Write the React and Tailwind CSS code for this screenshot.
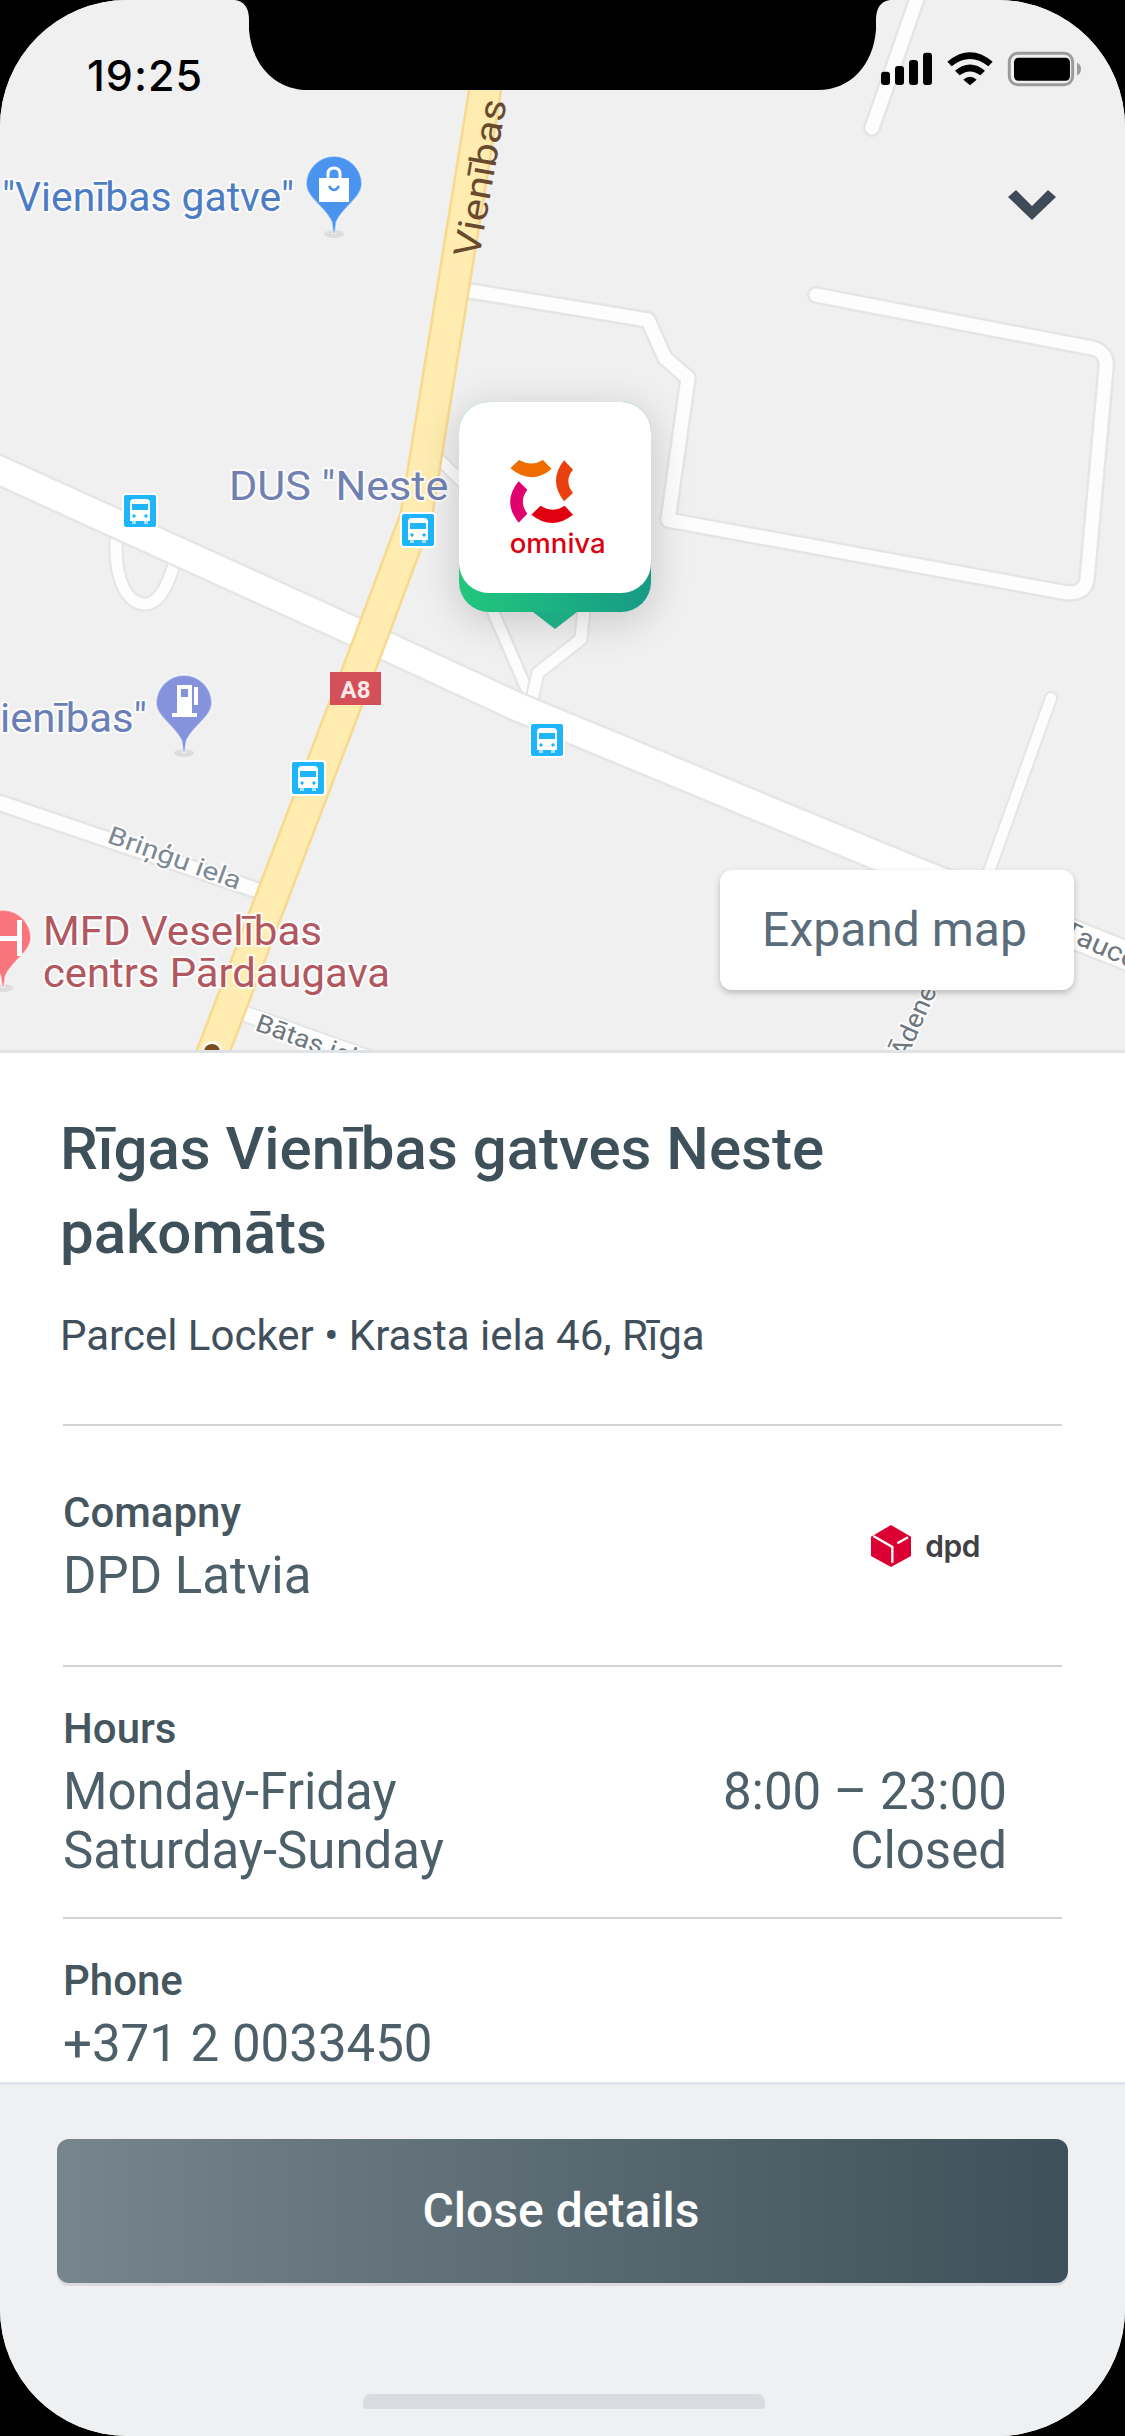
import React from "react";

function Bus({ x, y }) {
  return (
    <g transform={`translate(${x} ${y})`}>
      <rect x="-18" y="-18" width="36" height="36" rx="4" fill="#fff" />
      <rect x="-16" y="-16" width="32" height="32" rx="2" fill="#1fb5fb" />
      <path d="M-10 -8 Q-10 -12 -6 -12 H6 Q10 -12 10 -8 V10 H-10 Z" fill="#fff" />
      <rect x="-8" y="-7" width="16" height="6" fill="#1fb5fb" />
      <circle cx="-6" cy="5" r="1.7" fill="#1fb5fb" />
      <circle cx="6" cy="5" r="1.7" fill="#1fb5fb" />
      <rect x="-8" y="10" width="4" height="3" fill="#fff" opacity="0.6" />
      <rect x="4" y="10" width="4" height="3" fill="#fff" opacity="0.6" />
    </g>
  );
}

function PinShape({ x, y, fill, children }) {
  return (
    <g transform={`translate(${x} ${y})`}>
      <ellipse cx="0" cy="50" rx="10" ry="4" fill="#000" opacity="0.08" />
      <path
        d="M0 -28A28 28 0 0 1 28 0C28 14 8 24 2.5 38L1 49H-1L-2.5 38C-8 24 -28 14 -28 0A28 28 0 0 1 0 -28Z"
        fill={fill}
        stroke="#fff"
        strokeOpacity="0.55"
        strokeWidth="2"
      />
      {children}
    </g>
  );
}

function Road({ d, w = 14, halo = 18 }) {
  return (
    <>
      <path d={d} fill="none" stroke="#e5e5e5" strokeWidth={halo} strokeLinecap="round" strokeLinejoin="round" />
      <path d={d} fill="none" stroke="#fdfdfd" strokeWidth={w} strokeLinecap="round" strokeLinejoin="round" />
    </>
  );
}

function Label({ x, y, size, fill, len, rotate, children, halo = true, weight = 400 }) {
  return (
    <text
      x={x}
      y={y}
      fontSize={size}
      fontWeight={weight}
      fill={fill}
      textLength={len}
      lengthAdjust="spacingAndGlyphs"
      transform={rotate ? `rotate(${rotate} ${x} ${y})` : undefined}
      stroke={halo ? "#ffffff" : "none"}
      strokeOpacity="0.75"
      strokeWidth={halo ? 4 : 0}
      paintOrder="stroke"
    >
      {children}
    </text>
  );
}

function MapDrawing() {
  return (
    <svg className="absolute inset-0" width="1125" height="1050" viewBox="0 0 1125 1050">
      <Road d="M920 -10L872 128" w={13} halo={18} />
      <Road d="M1051 698L986 880" w={10} halo={14} />
      <Road d="M470 291L648 320L665 358L688 378L668 520L1062 592Q1084 596 1087 580L1106 368Q1108 352 1092 348L816 295" w={13} halo={18} />
      <Road d="M118 520C110 580 128 604 145 604C160 604 170 582 176 556" w={11} halo={15} />
      <Road d="M0 803L262 892" w={14} halo={19} />
      <Road d="M240 1012L380 1062" w={14} halo={18} />
      <Road d="M430 450L470 490" w={10} halo={14} />
      <Road d="M488 600L527 690" w={10} halo={15} />
      <Road d="M585 600L581 639L538 673L530 708" w={11} halo={15} />
      <path d="M-10 466L373 640L520 708L912 870L1100 945L1130 957" fill="none" stroke="#e6e6e6" strokeWidth="32" />
      <path d="M-10 466L373 640L520 708L912 870L1100 945L1130 957" fill="none" stroke="#ffffff" strokeWidth="27" />
      <path d="M490 60L416 517L370 640L210 1060" fill="none" stroke="#f8d98e" strokeWidth="34" strokeLinejoin="round" />
      <path d="M490 60L416 517L370 640L210 1060" fill="none" stroke="#feecb0" strokeWidth="29" strokeLinejoin="round" />

      <Label x={479} y={259} size={37} fill="#6a4a2e" len={160} rotate={-80} halo={false}>Vienības</Label>
      <Label x={2} y={211} size={40} fill="#4b7cc4" len={292}>"Vienības gatve"</Label>
      <PinShape x={334} y={184} fill="#4a93ef">
        <rect x="-15" y="-6" width="30" height="24" fill="#fff" />
        <path d="M-6 -6V-10Q-6 -16 0 -16Q6 -16 6 -10V-6" fill="none" stroke="#fff" strokeWidth="3" />
        <path d="M-5 2Q0 10 5 2" fill="none" stroke="#4a93ef" strokeWidth="2.5" />
      </PinShape>
      <Label x={229} y={500} size={40} fill="#7080b2" len={268}>DUS "Neste Vi</Label>
      <Label x={0} y={732} size={40} fill="#6a7fb6" len={147}>ienības"</Label>
      <PinShape x={184} y={703} fill="#8592dc">
        <rect x="-7" y="-18" width="15" height="28" fill="#fff" />
        <rect x="-3" y="-14" width="7" height="8" fill="#8592dc" />
        <rect x="-12" y="10" width="25" height="4" fill="#fff" />
        <path d="M12 -16V2" stroke="#fff" strokeWidth="4" />
      </PinShape>
      <Label x={106} y={842} size={25} fill="#7d8995" len={140} rotate={20}>Briņģu iela</Label>
      <PinShape x={3} y={938} fill="#f8757c">
        <rect x="-14" y="-18" width="5" height="36" fill="#fff" />
        <rect x="14" y="-18" width="5" height="36" fill="#fff" />
        <rect x="-14" y="-2" width="30" height="5" fill="#fff" />
      </PinShape>
      <Label x={43} y={945} size={40} fill="#b0575f" len={279}>MFD Veselības</Label>
      <Label x={43} y={987} size={40} fill="#b0575f" len={347}>centrs Pārdaugava</Label>
      <Label x={254} y={1030} size={25} fill="#6e767e" len={120} rotate={20}>Bātas iela</Label>
      <circle cx="212" cy="1052" r="11" fill="#fff" opacity="0.8" />
      <circle cx="212" cy="1052" r="8" fill="#7a4a20" />
      <Label x={906} y={1060} size={26} fill="#6e767e" len={90} rotate={-66}>Ādenes</Label>
      <Label x={1060} y={937} size={27} fill="#6e767e" len={80} rotate={24}>Tauce</Label>

      <Bus x={140} y={511} />
      <Bus x={418} y={530} />
      <Bus x={547} y={740} />
      <Bus x={308} y={778} />
      <rect x="330" y="672" width="51" height="33" fill="#d35058" />
      <text x="355.5" y="698" fontSize="24" fontWeight="700" fill="#fbe9e9" textAnchor="middle">A8</text>
    </svg>
  );
}

function OmnivaLogo() {
  return (
    <svg width="98" height="96" viewBox="205 205 294 288">
      <path d="M212 236L238 211Q275 232 310 211L336 238Q275 288 212 236Z" fill="#ee6c00" />
      <path d="M373 212L400 240Q372 273 400 310L373 335Q325 273 373 212Z" fill="#ea4010" />
      <path d="M237 275L263 300Q236 336 263 372L237 399Q186 336 237 275Z" fill="#e0006e" />
      <path d="M303 348Q340 372 375 348L400 375Q338 425 275 375Z" fill="#e0000f" />
      <text x="210" y="490" fontSize="80" fontWeight="500" fill="#dd0011" textLength="288" lengthAdjust="spacingAndGlyphs" fontFamily="Inter, sans-serif">omniva</text>
    </svg>
  );
}

function DpdLogo() {
  return (
    <div className="flex items-center gap-[14px] h-[44px]">
      <svg width="40" height="42" viewBox="96 102 120 126">
        <path d="M156 102L216 137V195L156 228L96 195V137Z" fill="#dc0032" />
        <path d="M103 135L160 168V215M175 157L207 139" fill="none" stroke="#fff" strokeWidth="7" />
      </svg>
      <span className="font-[Inter,sans-serif] font-semibold text-[30px] leading-[44px] text-[#414042] tracking-[-0.5px]">dpd</span>
    </div>
  );
}

function StatusIcons() {
  return (
    <svg width="203.33" height="36.67" viewBox="120 150 610 110">
      <rect x="123" y="215" width="27" height="40" rx="9" fill="#000" />
      <rect x="165" y="198" width="27" height="57" rx="9" fill="#000" />
      <rect x="207" y="180" width="27" height="75" rx="9" fill="#000" />
      <rect x="249" y="158" width="27" height="97" rx="9" fill="#000" />
      <path d="M322 185Q390 128 458 185L445 199Q390 155 335 199Z" fill="#000" />
      <path d="M345 212Q390 175 435 212L421 226Q390 203 359 226Z" fill="#000" />
      <path d="M370 239Q390 221 410 239L390 256Z" fill="#000" />
      <rect x="508" y="160" width="190" height="94" rx="25" fill="none" stroke="#9b9b9b" strokeWidth="9" />
      <rect x="522" y="173" width="168" height="69" rx="13" fill="#000" />
      <path d="M711 188Q723 192 723 207Q723 222 711 226Z" fill="#9b9b9b" />
    </svg>
  );
}

function Row({ children, className = "" }) {
  return <div className={`border-t-2 border-[#d2d4d6] ${className}`}>{children}</div>;
}

export default function App() {
  return (
    <div className="w-[1125px] h-[2436px] bg-black font-[Roboto,sans-serif] relative overflow-hidden">
      <div className="w-full h-full rounded-[127px] overflow-hidden bg-[#eff0f2] flex flex-col">
        <div className="relative h-[1050px] shrink-0 bg-[#f0f0f0] overflow-hidden">
          <MapDrawing />
          <div className="absolute left-[459px] top-[402px] w-[192px] h-[210px] rounded-[30px] bg-gradient-to-r from-[#22c77c] to-[#179a85] shadow-[0_8px_40px_rgba(0,0,0,0.18)]">
            <div className="h-[191px] rounded-[30px] bg-white pl-[49px] pt-[56px]">
              <OmnivaLogo />
            </div>
            <div className="absolute left-[74px] top-[210px] w-0 h-0 border-x-[22px] border-x-transparent border-t-[17px] border-t-[#1cab83]" />
          </div>
          <div className="absolute left-[1006px] top-[188px]">
            <svg width="52" height="34" viewBox="0 0 52 34">
              <path d="M2 9L10 2L26 18L42 2L50 9L26 32Z" fill="#3f4c58" />
            </svg>
          </div>
          <div className="absolute left-[720px] top-[870px] w-[354px] h-[120px] pr-[5px] bg-white rounded-[12px] shadow-[0_3px_6px_rgba(0,0,0,0.22)] flex items-center justify-center text-[48px] text-[#5b6c7a]">
            Expand map
          </div>
        </div>

        <div className="flex-1 min-h-0 bg-white border-y-[3px] border-t-[#dfe3e6] border-b-[#dfe4ec] overflow-hidden">
          <div className="pl-[60px] pr-[200px] pt-[54px] pb-[58px]">
            <h1 className="text-[60px] leading-[84px] font-medium text-[#3e515b]">Rīgas Vienības gatves Neste pakomāts</h1>
            <p className="mt-[31px] text-[42px] leading-[60px] text-[#3f4f5c]">Parcel Locker • Krasta iela 46, Rīga</p>
          </div>
          <div className="px-[63px]">
            <Row className="h-[241px] pt-[57px]">
              <div className="flex justify-between">
                <div>
                  <div className="text-[42px] leading-[60px] font-medium text-[#45565f]">Comapny</div>
                  <div className="text-[51px] leading-[65px] text-[#4d5f68]">DPD Latvia</div>
                </div>
                <div className="pr-[82px] pt-[41px]"><DpdLogo /></div>
              </div>
            </Row>
            <Row className="h-[252px] pt-[32px]">
              <div className="text-[42px] leading-[60px] font-medium text-[#45565f]">Hours</div>
              <div className="mt-[3px] flex justify-between pr-[55px] text-[51px] leading-[59px] text-[#4d5f68]">
                <div>
                  <div>Monday-Friday</div>
                  <div>Saturday-Sunday</div>
                </div>
                <div className="text-right">
                  <div>8:00 – 23:00</div>
                  <div>Closed</div>
                </div>
              </div>
            </Row>
            <Row className="pt-[32px]">
              <div className="text-[42px] leading-[60px] font-medium text-[#45565f]">Phone</div>
              <div className="text-[51px] leading-[65px] text-[#4d5f68]">+371 2 0033450</div>
            </Row>
          </div>
        </div>

        <div className="h-[351px] shrink-0 bg-[#eff0f2] flex flex-col items-center pt-[54px]">
          <button className="w-[1011px] h-[144px] pr-[3px] rounded-[12px] bg-gradient-to-r from-[#77858c] to-[#3e5059] shadow-[0_3px_0_#d9dbe0] text-white text-[48px] font-medium">
            Close details
          </button>
          <div className="mt-[111px] ml-[2px] w-[402px] h-[15px] rounded-t-[8px] rounded-b-[4px] bg-[#dadbe0]" />
        </div>
      </div>

      <svg className="absolute left-0 top-0" width="1125" height="92" viewBox="0 0 1125 92">
        <path d="M235 0Q249 2 249 20V30C252 66 276 90 308 90H818C850 90 873 66 876 30V20Q876 2 890 0Z" fill="#000" />
      </svg>
      <div className="absolute inset-x-0 top-0 flex justify-between pl-[87px] pr-[42px]">
        <div className="pt-[50px] text-[43px] leading-[50px] tracking-[1px] font-medium font-[Inter,sans-serif] text-black">19:25</div>
        <div className="pt-[50px]"><StatusIcons /></div>
      </div>
    </div>
  );
}
